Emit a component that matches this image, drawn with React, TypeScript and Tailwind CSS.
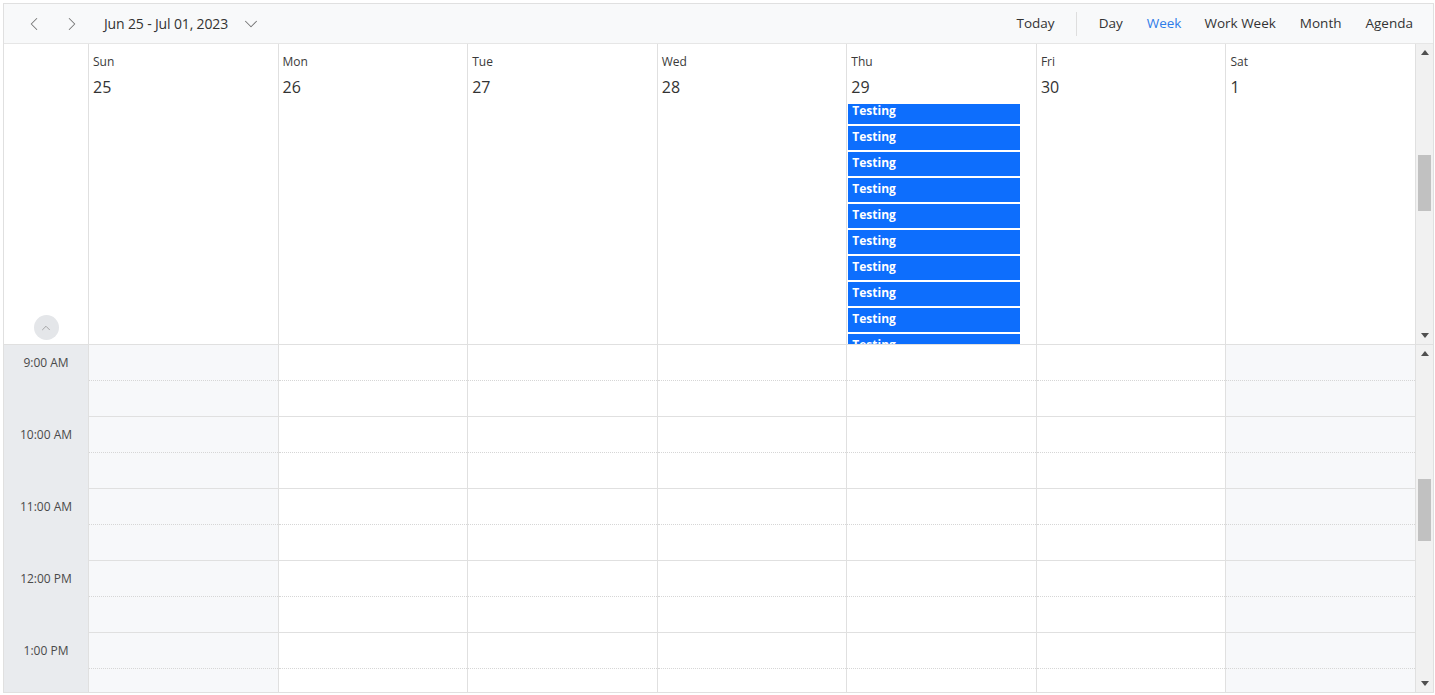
import React from "react";
import { ChevronLeft, ChevronRight, ChevronDown, ChevronUp } from "lucide-react";

const days = [
  { name: "Sun", date: "25", off: true },
  { name: "Mon", date: "26", off: false },
  { name: "Tue", date: "27", off: false },
  { name: "Wed", date: "28", off: false },
  { name: "Thu", date: "29", off: false },
  { name: "Fri", date: "30", off: false },
  { name: "Sat", date: "1", off: true },
];

const hours = ["9:00 AM", "10:00 AM", "11:00 AM", "12:00 PM", "1:00 PM"];

function Scrollbar({ thumbTop, thumbHeight }: { thumbTop: number; thumbHeight: number }) {
  return (
    <div className="w-[17px] shrink-0 bg-[#f1f1f1] flex flex-col items-center relative">
      <div className="h-[17px] w-full flex items-center justify-center">
        <svg width="8" height="5" viewBox="0 0 8 5"><path d="M0 5 L4 0 L8 5 Z" fill="#505050" /></svg>
      </div>
      <div className="flex-1 w-full relative">
        <div
          className="absolute left-[2px] right-[2px] bg-[#c1c1c1]"
          style={{ top: thumbTop, height: thumbHeight }}
        />
      </div>
      <div className="h-[17px] w-full flex items-center justify-center">
        <svg width="8" height="5" viewBox="0 0 8 5"><path d="M0 0 L4 5 L8 0 Z" fill="#505050" /></svg>
      </div>
    </div>
  );
}

export default function App() {
  const events = Array.from({ length: 11 });
  return (
    <div
      className="w-[1435px] h-[695px] bg-white p-[3px] text-[#333]"
      style={{ fontFamily: '"Open Sans", "Noto Sans", sans-serif' }}
    >
      <div className="h-[690px] w-[1431px] border border-[#e0e0e0] flex flex-col overflow-hidden">
        {/* Toolbar */}
        <div className="h-[40px] shrink-0 bg-[#f8f9fa] border-b border-[#e6e6e6] flex items-center">
          <div className="flex items-center pl-[18px]">
            <button className="w-[24px] h-[24px] flex items-center justify-center text-[#757575]">
              <ChevronLeft size={22} strokeWidth={1.1} />
            </button>
            <button className="w-[24px] h-[24px] ml-[14px] flex items-center justify-center text-[#757575]">
              <ChevronRight size={22} strokeWidth={1.1} />
            </button>
            <span className="ml-[20px] text-[14px] text-[#333] tracking-[-0.15px]">Jun 25 - Jul 01, 2023</span>
            <span className="ml-[12px] text-[#757575] flex items-center">
              <ChevronDown size={22} strokeWidth={1.1} />
            </span>
          </div>
          <div className="ml-auto flex items-center pr-[20px] text-[13.5px] text-[#333]">
            <span>Today</span>
            <div className="w-px h-[24px] bg-[#dedede] ml-[21px] mr-[22px]" />
            <span>Day</span>
            <span className="ml-[24px] text-[#2f7ce8]">Week</span>
            <span className="ml-[23px]">Work Week</span>
            <span className="ml-[24px]">Month</span>
            <span className="ml-[24px]">Agenda</span>
          </div>
        </div>

        {/* All-day / header area */}
        <div className="h-[301px] shrink-0 flex border-b border-[#e0e0e0]">
          <div className="w-[85px] shrink-0 border-r border-[#e0e0e0] flex flex-col items-center justify-end pb-[4px]">
            <div className="w-[25px] h-[25px] rounded-full bg-[#e4e6e9] flex items-center justify-center text-[#8a8a8a]">
              <ChevronUp size={14} strokeWidth={1.2} />
            </div>
          </div>
          {days.map((d, i) => (
            <div key={i} className="flex-1 min-w-0 border-r border-[#e0e0e0] flex flex-col last:border-r-0">
              <div className="pl-[4px] pt-[10px] text-[12px] leading-[16px] text-[#3a3a3a]">{d.name}</div>
              <div className="pl-[4px] pt-[7px] text-[16px] leading-[20px] text-[#333]">{d.date}</div>
              <div className="mt-[7px] flex-1 overflow-hidden">
                {d.name === "Thu" && (
                  <div className="-mt-[4px] pl-px flex flex-col gap-[2px]">
                    {events.map((_, k) => (
                      <div
                        key={k}
                        className="w-[172px] h-[24px] bg-[#0d6efd] text-white font-bold text-[12px] leading-[14px] pl-[4px] pt-[4px]"
                      >
                        Testing
                      </div>
                    ))}
                  </div>
                )}
              </div>
            </div>
          ))}
          <Scrollbar thumbTop={94} thumbHeight={56} />
        </div>

        {/* Time grid */}
        <div className="flex-1 flex overflow-hidden">
          <div className="w-[85px] shrink-0 bg-[#e9ebee] border-r border-[#e0e0e0] flex flex-col">
            {hours.map((h) => (
              <div key={h} className="h-[72px] shrink-0 flex justify-center pt-[10px] text-[12px] leading-[16px] text-[#4a4a4a]">
                {h}
              </div>
            ))}
          </div>
          {days.map((d, i) => (
            <div
              key={i}
              className={`flex-1 min-w-0 border-r border-[#e0e0e0] flex flex-col ${d.off ? "bg-[#f7f8fa]" : "bg-white"}`}
            >
              {hours.map((h) => (
                <div key={h} className="h-[72px] shrink-0 flex flex-col border-b border-[#e0e0e0]">
                  <div className="h-[36px] border-b border-dotted border-[#d6d6d6]" />
                  <div className="flex-1" />
                </div>
              ))}
            </div>
          ))}
          <Scrollbar thumbTop={117} thumbHeight={62} />
        </div>
      </div>
    </div>
  );
}
